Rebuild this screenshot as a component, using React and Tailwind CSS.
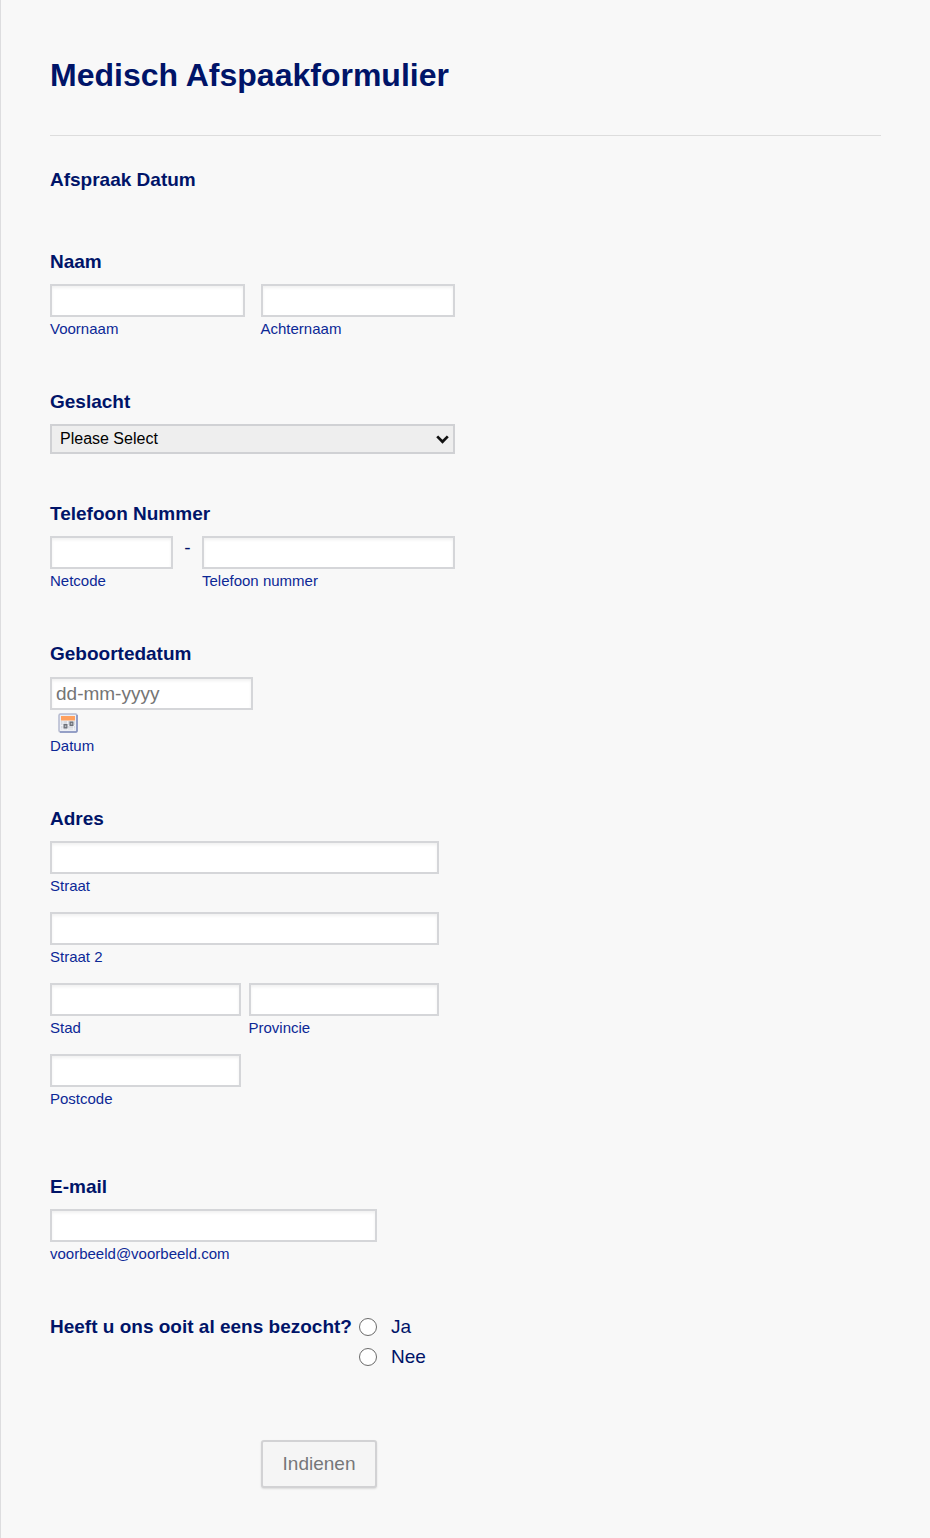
import React from 'react';

const boxClass =
  'block h-[33px] w-full border-2 border-[#d5d6d9] bg-white px-1 text-[19px] text-[#001468] shadow-[inset_0_2px_3px_rgba(0,0,0,0.06)] placeholder:text-[#757575]';
const headingClass = 'block text-[19px] leading-6 font-bold text-[#001468]';

function Entry({ id, sub, className = '', type = 'text' }) {
  return (
    <div className={className}>
      <input id={id} name={id} type={type} className={boxClass} />
      <label htmlFor={id} className="mt-0.5 block text-[15px] leading-5 text-[#0c2896]">
        {sub}
      </label>
    </div>
  );
}

function Group({ title, className = '', children }) {
  return (
    <fieldset className={className}>
      <legend className={headingClass}>{title}</legend>
      <div className="mt-2.5">{children}</div>
    </fieldset>
  );
}

function CalendarIcon() {
  return (
    <svg width="20" height="20" viewBox="0 0 20 20" aria-hidden="true">
      <rect x="1" y="1" width="18" height="18" rx="1.5" fill="#edf0f6" stroke="#b4b9cf" strokeWidth="1.5" />
      <path d="M19 2v16q0 1-1 1H2" fill="none" stroke="#8593c0" strokeWidth="1.5" />
      <rect x="3" y="3" width="14" height="4.5" fill="#ffa15f" />
      <path d="M3 8h14v9H3z" fill="#d9dce2" />
      <path d="M3 12.5h14M3 16h14M5 8v9M9.5 8v9M15.5 8v9" stroke="#f7f8fb" strokeWidth="0.8" />
      <rect x="5.5" y="11" width="4" height="4.5" fill="#6f737a" />
      <rect x="6.8" y="12.4" width="1.5" height="1.7" fill="#b9bcc4" />
      <rect x="11.5" y="8.5" width="4" height="4.5" fill="#6f737a" />
      <rect x="12.8" y="9.9" width="1.5" height="1.7" fill="#b9bcc4" />
    </svg>
  );
}

function Choice({ value, label }) {
  return (
    <label className="flex h-[30px] items-center gap-[14px] text-[19px] text-[#001468]">
      <input
        type="radio"
        name="bezocht"
        value={value}
        className="size-[18px] appearance-none rounded-full border border-[#6b6b6b] bg-white checked:border-[5px] checked:border-[#0075ff]"
      />
      {label}
    </label>
  );
}

export default function App() {
  return (
    <main className="min-h-screen border-l border-[#dddddf] bg-[#f8f8f8] pr-[49px] pb-[50px] pl-[49px] font-['Liberation_Sans',Arial,sans-serif]">
      <header className="border-b border-[#dddddd] pt-[55px] pb-10">
        <h1 className="text-[32px] leading-10 font-bold text-[#001468]">Medisch Afspaakformulier</h1>
      </header>

      <form className="pt-8" onSubmit={(e) => e.preventDefault()}>
        <h2 className={headingClass}>Afspraak Datum</h2>

        <Group title="Naam" className="mt-[58px]">
          <div className="flex w-[405px] gap-4">
            <Entry id="voornaam" sub="Voornaam" className="flex-1" />
            <Entry id="achternaam" sub="Achternaam" className="flex-1" />
          </div>
        </Group>

        <div className="mt-[51px]">
          <label htmlFor="geslacht" className={headingClass}>
            Geslacht
          </label>
          <div className="relative mt-2.5 w-[405px]">
            <select
              id="geslacht"
              name="geslacht"
              className="block h-[30px] w-full appearance-none border-2 border-[#d0d1d4] bg-[#eeeeee] pr-6 pl-2 text-[16px] text-black"
            >
              <option>Please Select</option>
              <option>Man</option>
              <option>Vrouw</option>
            </select>
            <svg
              className="pointer-events-none absolute top-[11px] right-[6px]"
              width="13"
              height="9"
              viewBox="0 0 13 9"
              aria-hidden="true"
            >
              <path d="M1.2 1.4 6.5 6.8 11.8 1.4" fill="none" stroke="#101010" strokeWidth="2.7" />
            </svg>
          </div>
        </div>

        <Group title="Telefoon Nummer" className="mt-12">
          <div className="flex">
            <Entry id="netcode" sub="Netcode" type="tel" className="w-[123px]" />
            <span className="w-[29px] text-center text-[19px] leading-6 text-[#001468]">-</span>
            <Entry id="telefoon" sub="Telefoon nummer" type="tel" className="w-[253px]" />
          </div>
        </Group>

        <Group title="Geboortedatum" className="mt-[51px]">
          <div className="w-[203px] pt-px">
            <input id="datum" name="datum" type="text" placeholder="dd-mm-yyyy" className={boxClass} />
          </div>
          <button type="button" aria-label="Kies een datum" className="mt-[3px] ml-2 block">
            <CalendarIcon />
          </button>
          <label htmlFor="datum" className="mt-[3px] block text-[15px] leading-5 text-[#0c2896]">
            Datum
          </label>
        </Group>

        <Group title="Adres" className="mt-[51px]">
          <div className="grid w-[389px] grid-cols-2 gap-x-2 gap-y-4">
            <Entry id="straat" sub="Straat" className="col-span-2" />
            <Entry id="straat2" sub="Straat 2" className="col-span-2" />
            <Entry id="stad" sub="Stad" />
            <Entry id="provincie" sub="Provincie" />
            <Entry id="postcode" sub="Postcode" />
          </div>
        </Group>

        <Group title="E-mail" className="mt-[66px]">
          <Entry id="email" sub="voorbeeld@voorbeeld.com" type="email" className="w-[327px]" />
        </Group>

        <div role="radiogroup" aria-labelledby="bezocht" className="mt-12 flex gap-[7px]">
          <span id="bezocht" className="text-[19px] leading-[30px] font-bold text-[#001468]">
            Heeft u ons ooit al eens bezocht?
          </span>
          <div>
            <Choice value="ja" label="Ja" />
            <Choice value="nee" label="Nee" />
          </div>
        </div>

        <button
          type="submit"
          className="mt-[68px] ml-[211px] block h-12 w-[116px] rounded-[3px] border-2 border-[#d2d2d4] bg-[#f5f5f5] text-[19px] text-[#757779] shadow-[0_1px_2px_rgba(0,0,0,0.12)]"
        >
          Indienen
        </button>
      </form>
    </main>
  );
}
